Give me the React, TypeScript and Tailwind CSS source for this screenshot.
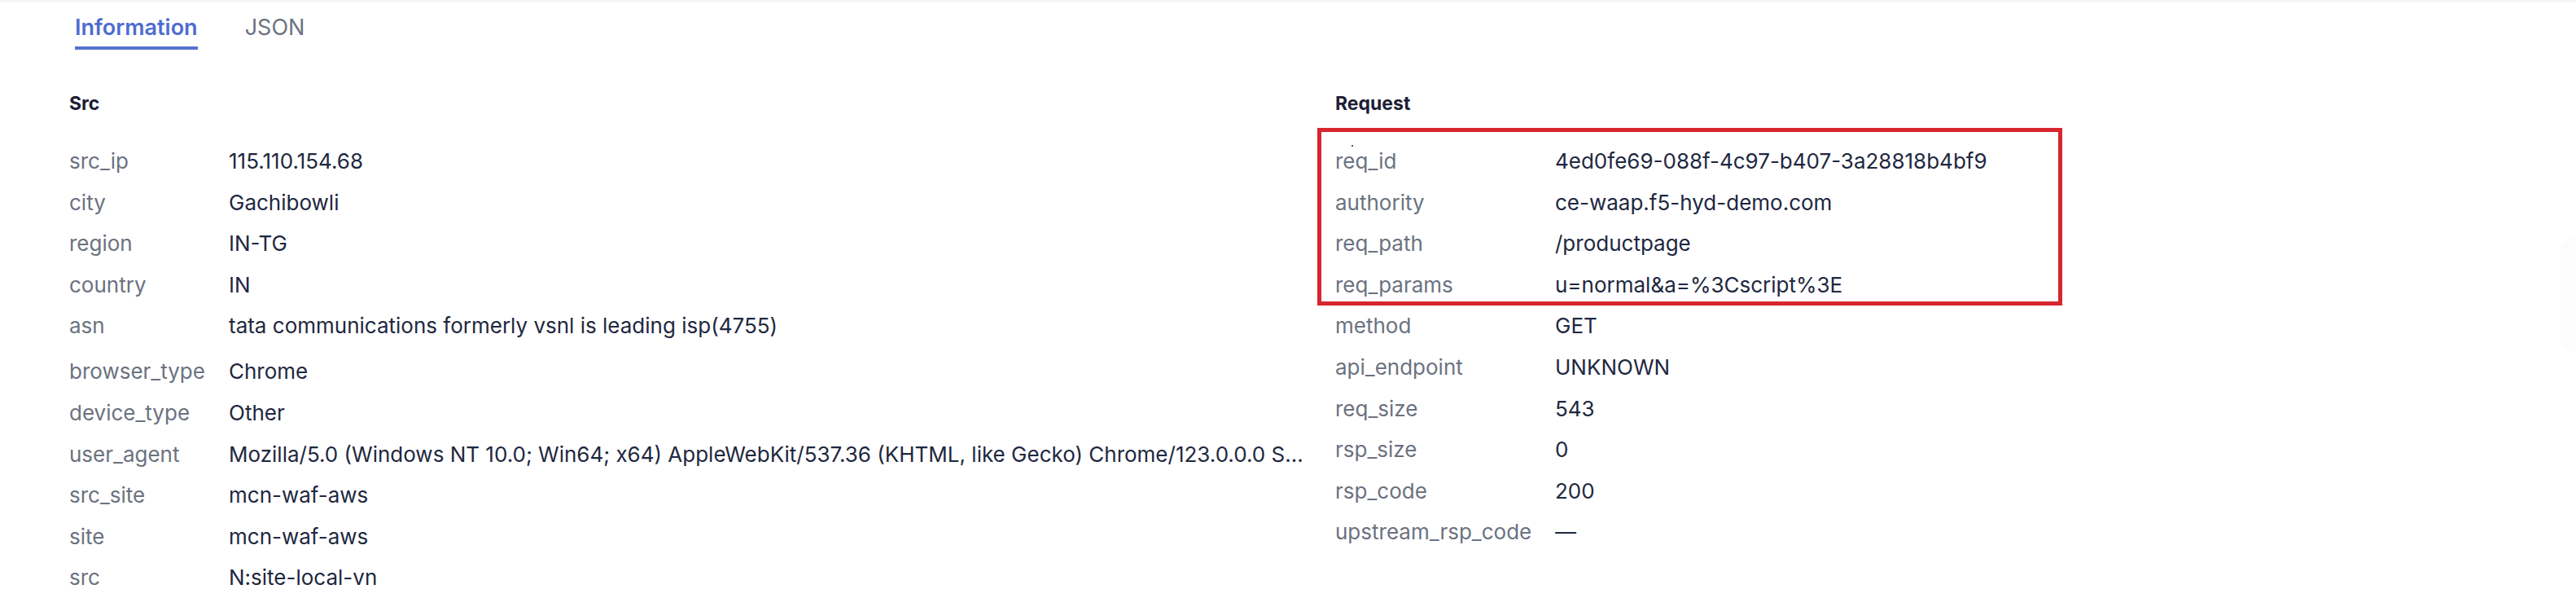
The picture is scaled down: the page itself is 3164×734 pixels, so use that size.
import React from 'react'

type Row = { k: string; v: string; tall?: boolean }

const srcRows: Row[] = [
  { k: 'src_ip', v: '115.110.154.68' },
  { k: 'city', v: 'Gachibowli' },
  { k: 'region', v: 'IN-TG' },
  { k: 'country', v: 'IN' },
  { k: 'asn', v: 'tata communications formerly vsnl is leading isp(4755)', tall: true },
  { k: 'browser_type', v: 'Chrome' },
  { k: 'device_type', v: 'Other' },
  {
    k: 'user_agent',
    v: 'Mozilla/5.0 (Windows NT 10.0; Win64; x64) AppleWebKit/537.36 (KHTML, like Gecko) Chrome/123.0.0.0 Safari/537.36',
  },
  { k: 'src_site', v: 'mcn-waf-aws' },
  { k: 'site', v: 'mcn-waf-aws' },
  { k: 'src', v: 'N:site-local-vn' },
]

const highlighted: Row[] = [
  { k: 'req_id', v: '4ed0fe69-088f-4c97-b407-3a28818b4bf9' },
  { k: 'authority', v: 'ce-waap.f5-hyd-demo.com' },
  { k: 'req_path', v: '/productpage' },
  { k: 'req_params', v: 'u=normal&a=%3Cscript%3E' },
]

const requestRows: Row[] = [
  { k: 'method', v: 'GET' },
  { k: 'api_endpoint', v: 'UNKNOWN' },
  { k: 'req_size', v: '543' },
  { k: 'rsp_size', v: '0' },
  { k: 'rsp_code', v: '200' },
  { k: 'upstream_rsp_code', v: '—' },
]

function Field({ row, labelWidth }: { row: Row; labelWidth: string }) {
  return (
    <div className={`flex items-start ${row.tall ? 'h-[56px]' : 'h-[50.6px]'}`}>
      <div className={`${labelWidth} shrink-0 text-[#6b7280] leading-[50px]`}>{row.k}</div>
      <div className="flex-1 min-w-0 truncate text-[#1e2840] leading-[50px]">{row.v}</div>
    </div>
  )
}

export default function App() {
  return (
    <div className="relative w-[3164px] h-[734px] overflow-hidden bg-white font-['Inter','Liberation_Sans',sans-serif] text-[26px]">
      <div className="h-[3px] bg-[#f5f5f6]" />

      {/* Tabs */}
      <div className="flex items-end gap-[58px] pl-[92px] mt-[15px] text-[27px]">
        <div className="pb-[7px] border-b-4 border-[#5472cf] text-[#4f6cd0] font-semibold leading-[32px]">
          Information
        </div>
        <div className="pb-[7px] border-b-4 border-transparent text-[#6b7280] leading-[32px]">JSON</div>
      </div>

      {/* Columns */}
      <div className="flex pl-[85px] mt-[51px]">
        {/* Src */}
        <div className="w-[1555px] pr-[31px]">
          <div className="text-[23px] font-bold text-[#1b2036] leading-[30px]">Src</div>
          <div className="mt-[31px]">
            {srcRows.map((r) => (
              <Field key={r.k} row={r} labelWidth="w-[196px]" />
            ))}
          </div>
        </div>

        {/* Request */}
        <div className="flex-1">
          <div className="text-[23px] font-bold text-[#1b2036] leading-[30px]">Request</div>
          <div className="mt-[31px]">
            <div className="relative">
              {highlighted.map((r) => (
                <Field key={r.k} row={r} labelWidth="w-[270px]" />
              ))}
              <span className="absolute left-[20px] top-[5px] w-[2px] h-[2px] rounded-full bg-[#222]" />
              <div className="absolute -left-[22px] -top-[16px] w-[915px] h-[218px] border-[5px] border-[#d8262f]" />
            </div>
            {requestRows.map((r) => (
              <Field key={r.k} row={r} labelWidth="w-[270px]" />
            ))}
          </div>
        </div>
      </div>

      {/* faint floating handle at right edge */}
      <div className="absolute left-[3144px] top-[292px] w-[40px] h-[140px] rounded-l-[20px] bg-[#fcfcfd]" />
    </div>
  )
}
